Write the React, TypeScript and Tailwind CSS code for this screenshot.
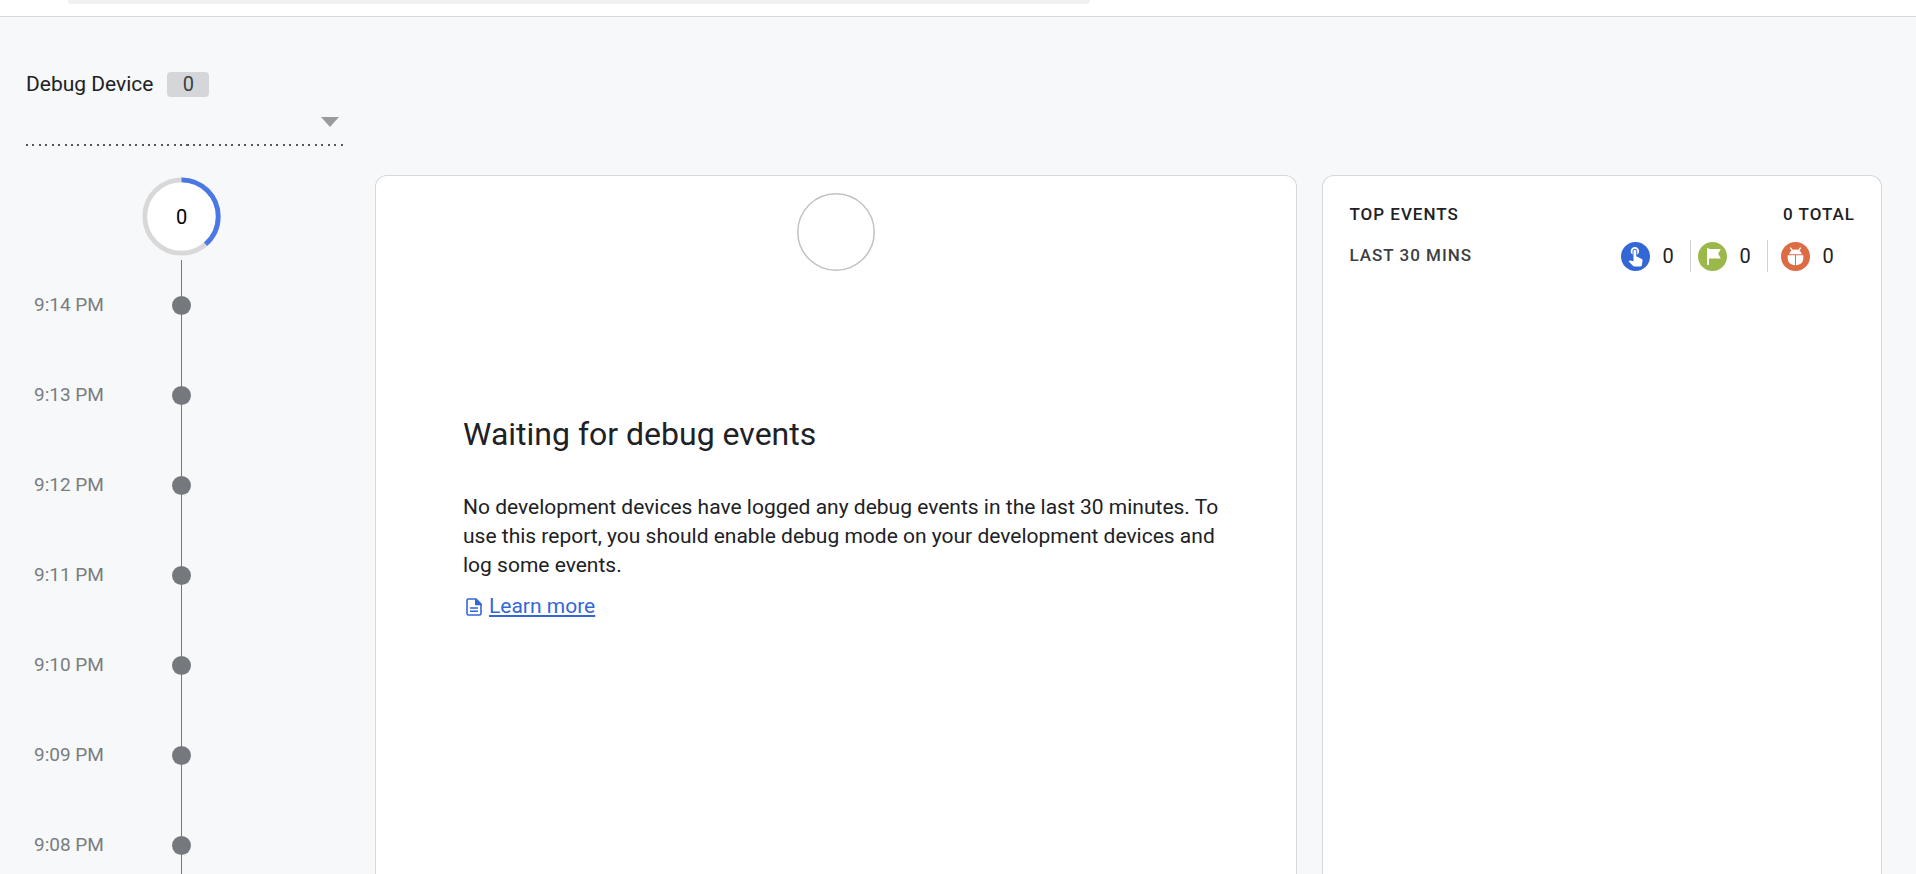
import React from 'react'

const times = ['9:14 PM', '9:13 PM', '9:12 PM', '9:11 PM', '9:10 PM', '9:09 PM', '9:08 PM']

const TouchIcon = () => (
  <svg viewBox="0 0 29 29" className="size-[29px]" aria-hidden="true">
    <circle cx="14.5" cy="14.5" r="14.5" fill="#3367d6" />
    <path
      transform="translate(3.2 2.2) scale(.93)"
      fill="#fff"
      d="M9 11.24V7.5C9 6.12 10.12 5 11.5 5S14 6.12 14 7.5v3.74c1.21-.81 2-2.18 2-3.74C16 5.01 13.99 3 11.5 3S7 5.01 7 7.5c0 1.56.79 2.93 2 3.74zm9.84 4.63l-4.54-2.26c-.17-.07-.35-.11-.54-.11H13v-6c0-.83-.67-1.5-1.5-1.5S10 6.67 10 7.5v10.74l-3.43-.72c-.08-.01-.15-.03-.24-.03-.31 0-.59.13-.79.33l-.79.8 4.94 4.94c.27.27.65.44 1.06.44h6.79c.75 0 1.33-.55 1.44-1.28l.75-5.27c.01-.07.02-.14.02-.2 0-.62-.38-1.16-.91-1.38z"
    />
  </svg>
)

const FlagIcon = () => (
  <svg viewBox="0 0 29 29" className="size-[29px]" aria-hidden="true">
    <circle cx="14.5" cy="14.5" r="14.5" fill="#9ab94a" />
    <path fill="#fff" d="M9 6.2h2v.9h11.8l-2.6 4.7 2.6 4.7H11v6.2H9z" />
  </svg>
)

const BugIcon = () => (
  <svg viewBox="0 0 29 29" className="size-[29px]" aria-hidden="true">
    <circle cx="14.5" cy="14.5" r="14.5" fill="#dd6b43" />
    <path d="M9.3 5.6l2.2 3M19.7 5.6l-2.2 3" stroke="#fff" strokeWidth="1.6" />
    <path fill="#fff" d="M8.2 12.2C8.7 9.4 11.2 7.6 14.5 7.6s5.8 1.8 6.3 4.6z" />
    <path fill="#fff" d="M6.7 13.3H14v10c-4.400-.3-7.300-3-7.300-7zM15 13.300h7.300v3c0 4-2.900 6.700-7.300 7z" />
  </svg>
)

const DocIcon = () => (
  <svg viewBox="0 0 16 18" className="h-[18px] w-4" aria-hidden="true">
    <path d="M2.500 1H10l5 5v9.500a1.500 1.500 0 0 1-1.500 1.500h-11A1.500 1.500 0 0 1 1 15.500v-13A1.500 1.500 0 0 1 2.500 1z" fill="none" stroke="#3367d6" strokeWidth="1.6" />
    <path d="M9 1h1.500l5 5v1.200H9z" fill="#3367d6" />
    <path d="M4 10h8M4 13.200h8" stroke="#3367d6" strokeWidth="1.5" />
  </svg>
)

const Count: React.FC<{ label: string; className: string; children: React.ReactNode }> = ({ label, className, children }) => (
  <li className={`flex h-8 items-center gap-3 ${className}`} aria-label={label}>
    {children}
    <span className="w-3 text-center text-xl">0</span>
  </li>
)

const Timeline = () => (
  <section aria-label="Timeline">
    <div className="relative ml-[116px] size-[79px]">
      <svg viewBox="0 0 79 79" className="size-full" aria-hidden="true">
        <circle cx="39.5" cy="39.5" r="36.7" fill="#fff" stroke="#d8d8d8" strokeWidth="4.8" />
        <circle cx="39.5" cy="39.5" r="36.7" fill="none" stroke="#4a78e6" strokeWidth="4.8" pathLength="360" strokeDasharray="139 221" transform="rotate(-90 39.5 39.5)" />
      </svg>
      <span className="absolute inset-0 flex items-center justify-center text-xl text-black">0</span>
    </div>
    <ol className="mt-1">
      {times.map((time) => (
        <li key={time} className="flex h-[90px] items-center pl-2">
          <span className="w-[138px] text-[19px] text-[#7a7d80]">{time}</span>
          <span className="flex h-full w-[19px] flex-col items-center">
            <span className="w-px flex-1 bg-[#75797d]" />
            <span className="size-[19px] rounded-full bg-[#75797d]" />
            <span className="w-px flex-1 bg-[#75797d]" />
          </span>
        </li>
      ))}
    </ol>
  </section>
)

export default function App() {
  return (
    <div className="flex h-screen flex-col overflow-hidden bg-[#f6f8fa] font-['Roboto',sans-serif] text-[#202124]">
      <header className="h-[17px] shrink-0 border-b border-[#d5d8dc] bg-white pl-[68px]">
        <div className="h-1 w-full max-w-[1022px] rounded-b-lg bg-[#f0f0f0]" />
      </header>

      <div className="ml-[26px] mt-[51px] w-[321px] shrink-0">
        <div className="flex h-8 items-center gap-[14px]">
          <label htmlFor="device" className="text-[21px] leading-8">Debug Device</label>
          <span className="flex h-[25px] w-[42px] items-center justify-center rounded bg-[#d5d6da] text-xl text-[#3c4043]">0</span>
        </div>
        <div className="relative">
          <select id="device" className="block h-11 w-full appearance-none bg-transparent text-xl outline-none">
            <option value="" />
          </select>
          <svg viewBox="0 0 18 10" className="pointer-events-none absolute right-2 top-[17px] h-[10px] w-[18px]" aria-hidden="true">
            <path d="M0 0h18l-9 10z" fill="#9a9b9c" />
          </svg>
        </div>
        <div className="h-[2px] bg-[repeating-linear-gradient(to_right,#55585c_0_2px,transparent_2px_2%)]" />
      </div>

      <main className="mt-[29px] grid min-h-0 flex-1 grid-cols-[324px_minmax(0,923fr)_minmax(0,560fr)] gap-x-[25px] pl-[26px] pr-[34px]">
        <div className="pt-[2px]">
          <Timeline />
        </div>

        <section className="rounded-t-xl border border-b-0 border-[#d5d8dc] bg-white pt-[17px]">
          <svg viewBox="0 0 78 78" className="mx-auto size-[78px]" aria-hidden="true">
            <circle cx="39" cy="39" r="38.2" fill="none" stroke="#c2c2c2" strokeWidth="1.5" />
          </svg>
          <div className="mt-[143px] pl-[87px] pr-16">
            <h1 className="text-[32px] leading-10">Waiting for debug events</h1>
            <p className="mt-[39px] text-[21px] leading-[29px]">
              No development devices have logged any debug events in the last 30 minutes. To use this report, you
              should enable debug mode on your development devices and log some events.
            </p>
            <a href="#learn" className="ml-[3px] mt-3 inline-flex items-center gap-[7px] text-[21px] leading-[29px] text-[#3367d6]">
              <DocIcon />
              <span className="underline decoration-2 underline-offset-2">Learn more</span>
            </a>
          </div>
        </section>

        <section className="rounded-t-xl border border-b-0 border-[#d5d8dc] bg-white px-[26px] pt-[27px]">
          <div className="flex h-6 items-center justify-between text-[17px] font-medium tracking-[1px]">
            <h2>TOP EVENTS</h2>
            <span>0 TOTAL</span>
          </div>
          <div className="mt-[13px] flex h-8 items-center justify-between">
            <h3 className="text-[17px] font-medium tracking-[1px] text-[#3c4043]">LAST 30 MINS</h3>
            <ul className="flex items-center pr-[21px]">
              <Count label="Events" className="border-r border-[#d0d2d5] pr-4">
                <TouchIcon />
              </Count>
              <Count label="Conversions" className="border-r border-[#d0d2d5] pl-[7px] pr-4">
                <FlagIcon />
              </Count>
              <Count label="Errors" className="pl-[13px]">
                <BugIcon />
              </Count>
            </ul>
          </div>
        </section>
      </main>
    </div>
  )
}
